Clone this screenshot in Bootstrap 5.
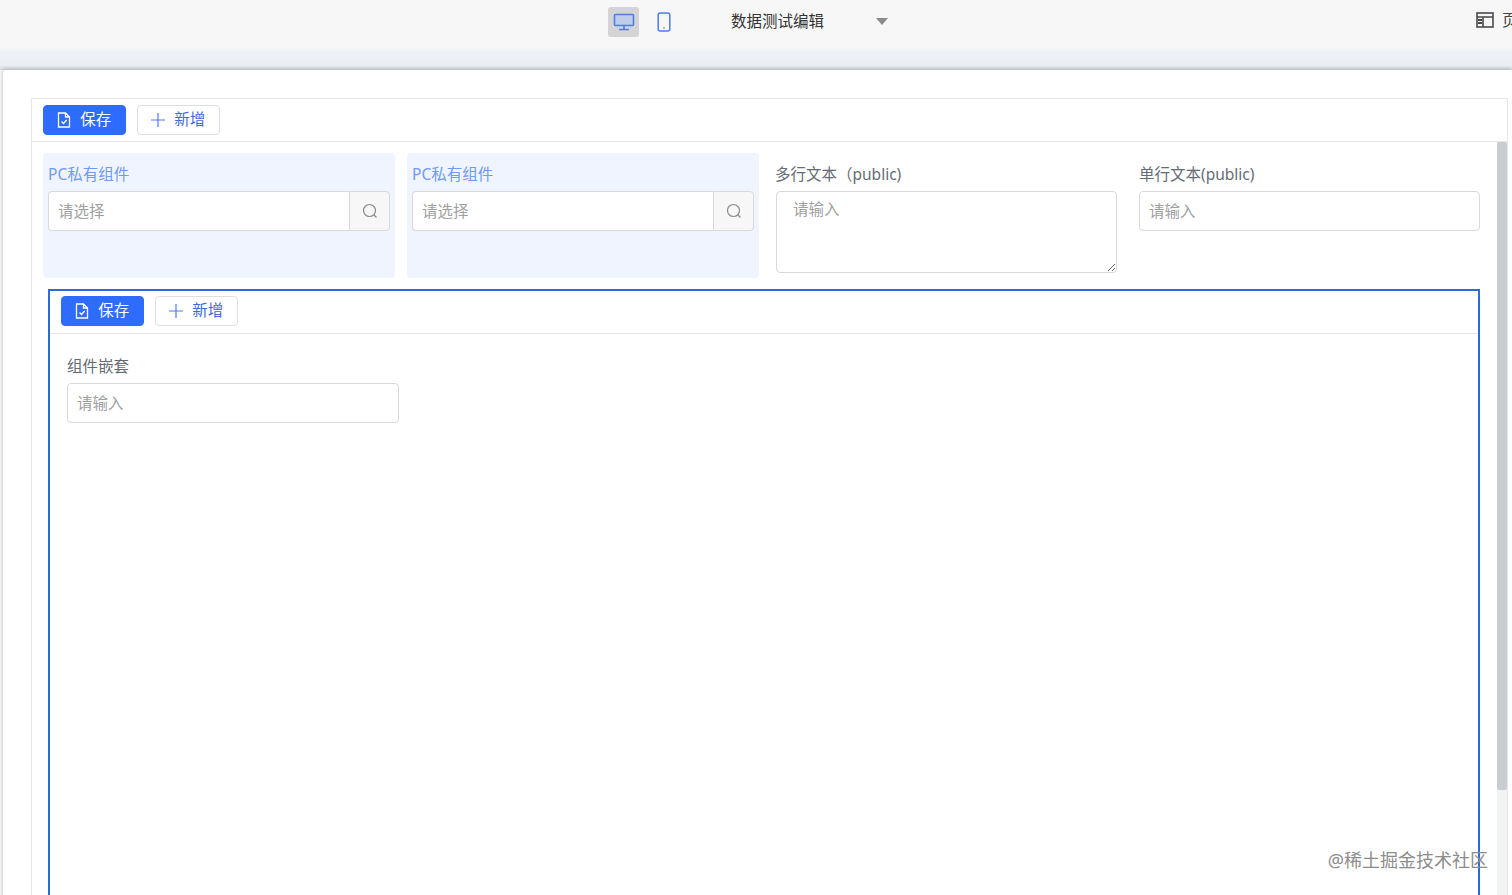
<!DOCTYPE html>
<html lang="zh-CN">
<head>
  <meta charset="UTF-8" />
  <title>数据测试编辑</title>
  <meta name="viewport" content="width=device-width, initial-scale=1" />
  <link href="https://cdn.jsdelivr.net/npm/bootstrap@5.3.3/dist/css/bootstrap.min.css" rel="stylesheet" />
  <style>
    html, body { height:100%; }
    body { background:#fff; overflow:hidden; font-family:"Noto Sans","Noto Sans CJK SC",sans-serif; font-size:15.5px; color:#666c75; }
    .top-zone { height:70px; background:linear-gradient(#f7f7f7 0, #f7f7f7 46px, #eef2f7 52px, #ebeff3 66px, #d5d9d9 70px); }
    .top-bar { height:44px; }
    .device-box { width:31px; height:30px; border-radius:3px; margin-top:7px; flex-shrink:0; }
    .device-on { background:#d4d4d4; margin-left:608px; }
    .device-off { margin-left:9px; }
    .page-title { margin-left:52px; margin-top:10px; color:#333; width:145px; flex-shrink:0; line-height:22px; }
    .caret-down { width:0; height:0; border:6px solid transparent; border-top:7px solid #8a8a8a; border-bottom:0; margin-top:18px; flex-shrink:0; }
    .page-link-top { margin-left:588px; margin-top:9px; color:#444; white-space:nowrap; flex-shrink:0; line-height:22px; }
    .sheet { margin-left:3px; height:845px; padding:28px 4px 0 28px; background:#fff; border-radius:3px 0 0 0; box-shadow:-1px -1px 4px rgba(90,100,100,.35); }
    .outer-panel { border:1px solid #e6e6e6; height:100%; }
    .tool-row { height:43px; padding:6px 11px; border-bottom:1px solid #e6e6e6; gap:11.5px; }
    .act-btn { width:82.5px; height:30px; padding:0; border-radius:4px; gap:9px; --bs-btn-font-size:15.5px; line-height:1; }
    .act-save { background:#2e6bff; border:1px solid #2e6bff; color:#fff; }
    .act-add { background:#fff; border:1px solid #dcdfe6; color:#4468d8; }
    .body-scroll { height:calc(100% - 43px); }
    .form-zone { width:1465px; padding:11px 0 0 11px; }
    .field-row { gap:12px; height:125px; }
    .field-cell { width:352px; padding:11px 5px 0 5px; border-radius:4px; }
    .field-cell.is-private { background:#f0f4ff; }
    .field-cell.is-private .field-name { color:#6f9bf2; }
    .field-cell.is-area { margin-left:4px; width:352px; padding-left:0; }
    .field-cell.is-area .field-area { margin-left:1px; }
    .field-cell.is-single { padding-left:0; margin-left:-1px; width:342px; padding-right:1px; }
    .field-cell.is-single .field-name, .field-cell.is-single .field-input { margin-left:1px; }
    .field-cell.is-single .field-input { width:341px; }
    .field-name { line-height:21px; height:27px; white-space:nowrap; }
    .field-input { height:40px; border:1px solid #d9d9d9; border-radius:4px; padding:0 9px; font-size:15.5px; box-shadow:none; color:#333; }
    .field-input::placeholder, .field-area::placeholder { color:#9f9f9f; }
    .field-area { width:341px; height:82px; border:1px solid #d9d9d9; border-radius:4px; padding:6px 16px; font-size:15.5px; display:block; resize:vertical; box-shadow:none; }
    .pick-group .field-input { border-radius:4px 0 0 4px; border-right:0; }
    .pick-btn { width:41px; height:40px; background:#f7f7f7; border:1px solid #d9d9d9; border-radius:0 4px 4px 0; }
    .nested-panel { margin:11px 0 0 5px; width:1432px; height:660px; border:2px solid #2b6bdc; border-bottom:0; }
    .nested-panel .tool-row { height:43px; padding:5px 11px; }
    .nested-body { padding:22px 17px 0 17px; }
    .nested-name { height:27px; line-height:21px; }
    .nested-field { width:332px; }
    .scroll-thumb { width:10px; height:648px; background:#c9cdd1; border-radius:2px; }
    .scroll-rail { width:10px; background:#f1f3f4; }
    .mark-text { position:absolute; right:24px; bottom:23px; color:#8c8c8c; font-size:18px; line-height:24px; white-space:nowrap; }
    .ico-blue { stroke:#4d7bf0; fill:none; }
  </style>
</head>
<body>

  <div class="top-zone">
    <div class="top-bar d-flex align-items-start">
      <div class="device-box device-on d-flex align-items-center justify-content-center">
        <svg width="22" height="18" viewBox="0 0 22 18" class="ico-blue" stroke-width="1.6"><rect x="1.5" y="1.5" width="19" height="11" rx="1" fill="#c0cde8"/><path d="M11 13v3M6 16.5h10"/></svg>
      </div>
      <div class="device-box device-off d-flex align-items-center justify-content-center">
        <svg width="14" height="20" viewBox="0 0 14 20" class="ico-blue" stroke-width="1.5"><rect x="1.2" y="1" width="11.6" height="18" rx="2"/><path d="M6.4 16h1.2"/></svg>
      </div>
      <div class="page-title">数据测试编辑</div>
      <div class="caret-down"></div>
      <div class="page-link-top d-flex align-items-center gap-2">
        <svg width="18" height="16" viewBox="0 0 18 16" fill="none" stroke="#4a4a4a" stroke-width="1.6"><rect x="1" y="1" width="16" height="14"/><path d="M1 5h16M7 5v10"/><path d="M2 8h4M2 11h4" stroke-width="2"/></svg>
        <span>页面</span>
      </div>
    </div>
  </div>

  <div class="sheet">
    <div class="outer-panel">
      <div class="tool-row d-flex align-items-start">
        <button class="btn act-btn act-save d-flex align-items-center justify-content-center">
          <svg width="14" height="16" viewBox="0 0 14 16" fill="none" stroke="#fff" stroke-width="1.3"><path d="M1.5 1h7l4 4v10h-11z"/><path d="M8.5 1v4h4M4.5 9.5l2 2 3.2-3.5"/></svg>保存
        </button>
        <button class="btn act-btn act-add d-flex align-items-center justify-content-center">
          <svg width="14" height="14" viewBox="0 0 14 14" stroke="#4d7bf0" stroke-width="1.2"><path d="M7 0v14M0 7h14"/></svg>新增
        </button>
      </div>

      <div class="body-scroll d-flex">
        <div class="form-zone">
          <div class="field-row d-flex">
            <div class="field-cell is-private">
              <div class="field-name">PC私有组件</div>
              <div class="pick-group d-flex">
                <input class="form-control field-input" placeholder="请选择" />
                <div class="pick-btn flex-shrink-0 d-flex align-items-center justify-content-center">
                  <svg width="16" height="16" viewBox="0 0 16 16" fill="none" stroke="#8a8a8a" stroke-width="1.2"><circle cx="7.5" cy="7.5" r="6"/><path d="M12 12l2.5 2.5"/></svg>
                </div>
              </div>
            </div>
            <div class="field-cell is-private">
              <div class="field-name">PC私有组件</div>
              <div class="pick-group d-flex">
                <input class="form-control field-input" placeholder="请选择" />
                <div class="pick-btn flex-shrink-0 d-flex align-items-center justify-content-center">
                  <svg width="16" height="16" viewBox="0 0 16 16" fill="none" stroke="#8a8a8a" stroke-width="1.2"><circle cx="7.5" cy="7.5" r="6"/><path d="M12 12l2.5 2.5"/></svg>
                </div>
              </div>
            </div>
            <div class="field-cell is-area">
              <div class="field-name">多行文本（public)</div>
              <textarea class="form-control field-area" placeholder="请输入"></textarea>
            </div>
            <div class="field-cell is-single">
              <div class="field-name">单行文本(public)</div>
              <input class="form-control field-input" placeholder="请输入" />
            </div>
          </div>

          <div class="nested-panel">
            <div class="tool-row d-flex align-items-start">
              <button class="btn act-btn act-save d-flex align-items-center justify-content-center">
                <svg width="14" height="16" viewBox="0 0 14 16" fill="none" stroke="#fff" stroke-width="1.3"><path d="M1.5 1h7l4 4v10h-11z"/><path d="M8.5 1v4h4M4.5 9.5l2 2 3.2-3.5"/></svg>保存
              </button>
              <button class="btn act-btn act-add d-flex align-items-center justify-content-center">
                <svg width="14" height="14" viewBox="0 0 14 14" stroke="#4d7bf0" stroke-width="1.2"><path d="M7 0v14M0 7h14"/></svg>新增
              </button>
            </div>
            <div class="nested-body">
              <div class="nested-name">组件嵌套</div>
              <input class="form-control field-input nested-field" placeholder="请输入" />
            </div>
          </div>
        </div>
        <div class="scroll-rail ms-auto flex-shrink-0">
          <div class="scroll-thumb"></div>
        </div>
      </div>
    </div>
  </div>

  <div class="mark-text">@稀土掘金技术社区</div>

</body>
</html>
